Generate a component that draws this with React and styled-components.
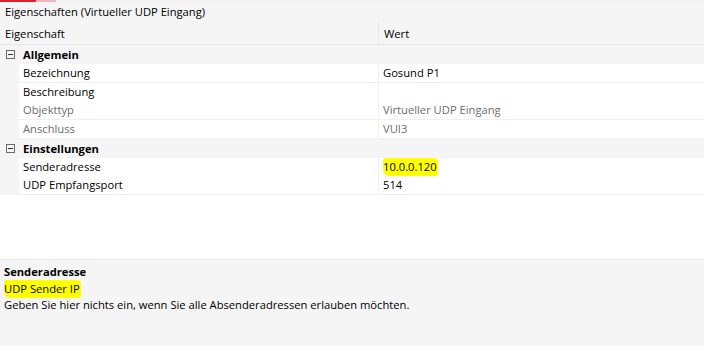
import React from 'react';
import styled, { createGlobalStyle } from 'styled-components';

const Global = createGlobalStyle`
  body { margin: 0; background: #fff; }
  * { box-sizing: border-box; }
`;

const Window = styled.div`
  width: 704px;
  height: 346px;
  display: flex;
  flex-direction: column;
  background: #fff;
  font-family: "Open Sans", "Noto Sans", sans-serif;
  font-size: 11.2px;
  color: #000;
  overflow: hidden;
`;

const Accent = styled.div`
  height: 2px;
  display: flex;
  background: #f4f4f4;
`;

const AccentPart = styled.div`
  width: ${(p) => p.$w}px;
  background: ${(p) => p.$c};
`;

const Title = styled.div`
  height: 20px;
  line-height: 20px;
  padding-left: 5px;
  background: #f5f5f5;
`;

const HeaderRow = styled.div`
  display: grid;
  grid-template-columns: 379px 1fr;
  height: 23px;
  background: #f5f5f5;
  border-bottom: 1px solid #e6e6e6;
`;

const HeaderCell = styled.div`
  padding-left: 5px;
  line-height: 23px;
  border-right: ${(p) => (p.$value ? 'none' : '1px solid #e6e6e6')};
`;

const GroupRow = styled.div`
  display: flex;
  align-items: center;
  height: 18.75px;
  background: #f5f5f5;
  font-weight: 700;
`;

const Toggle = styled.span`
  width: 9px;
  height: 9px;
  margin: 0 8px 0 6px;
  border: 1px solid #6a6a6a;
  position: relative;
  flex: none;
  &::after {
    content: '';
    position: absolute;
    left: 1px;
    right: 1px;
    top: 3px;
    height: 1px;
    background: #333;
  }
`;

const PropRow = styled.div`
  display: grid;
  grid-template-columns: 19px 360px 1fr;
  height: 18.75px;
  background: #f5f5f5;
`;

const NameCell = styled.div`
  background: #fff;
  border-bottom: 1px solid #f0f0f0;
  border-right: 1px solid #f0f0f0;
  padding-left: 4px;
  line-height: 18px;
  color: ${(p) => (p.$disabled ? '#6d6d6d' : '#000')};
  white-space: nowrap;
`;

const ValueCell = styled.div`
  background: #fff;
  border-bottom: 1px solid #f0f0f0;
  padding-left: 4px;
  line-height: 18px;
  color: ${(p) => (p.$disabled ? '#6d6d6d' : '#000')};
  white-space: nowrap;
`;

const Marker = styled.span`
  background: #ffff00;
  border-radius: 2px 4px 3px 6px;
  padding: 1px 1px 2px 0;
`;

const Filler = styled.div`
  flex: 1;
  background: #fff;
`;

const Description = styled.div`
  height: 87px;
  flex: none;
  background: #f5f5f5;
  border-top: 1px solid #e8e8e8;
  padding: 4px 4px;
  line-height: 16.5px;
`;

const DescTitle = styled.div`
  font-weight: 700;
`;

const groups = [
  {
    name: 'Allgemein',
    rows: [
      { name: 'Bezeichnung', value: 'Gosund P1' },
      { name: 'Beschreibung', value: '' },
      { name: 'Objekttyp', value: 'Virtueller UDP Eingang', disabled: true },
      { name: 'Anschluss', value: 'VUI3', disabled: true },
    ],
  },
  {
    name: 'Einstellungen',
    rows: [
      { name: 'Senderadresse', value: '10.0.0.120', marked: true },
      { name: 'UDP Empfangsport', value: '514' },
    ],
  },
];

export default function App() {
  return (
    <>
      <Global />
      <Window>
        <Accent>
          <AccentPart $w={36} $c="#e0202a" />
          <AccentPart $w={20} $c="#f3b5b8" />
        </Accent>
        <Title>Eigenschaften (Virtueller UDP Eingang)</Title>
        <HeaderRow>
          <HeaderCell>Eigenschaft</HeaderCell>
          <HeaderCell $value>Wert</HeaderCell>
        </HeaderRow>
        {groups.map((g) => (
          <React.Fragment key={g.name}>
            <GroupRow>
              <Toggle />
              {g.name}
            </GroupRow>
            {g.rows.map((r) => (
              <PropRow key={r.name}>
                <span />
                <NameCell $disabled={r.disabled}>{r.name}</NameCell>
                <ValueCell $disabled={r.disabled}>
                  {r.marked ? <Marker>{r.value}</Marker> : r.value}
                </ValueCell>
              </PropRow>
            ))}
          </React.Fragment>
        ))}
        <Filler />
        <Description>
          <DescTitle>Senderadresse</DescTitle>
          <div><Marker>UDP Sender IP</Marker></div>
          <div>Geben Sie hier nichts ein, wenn Sie alle Absenderadressen erlauben möchten.</div>
        </Description>
      </Window>
    </>
  );
}
